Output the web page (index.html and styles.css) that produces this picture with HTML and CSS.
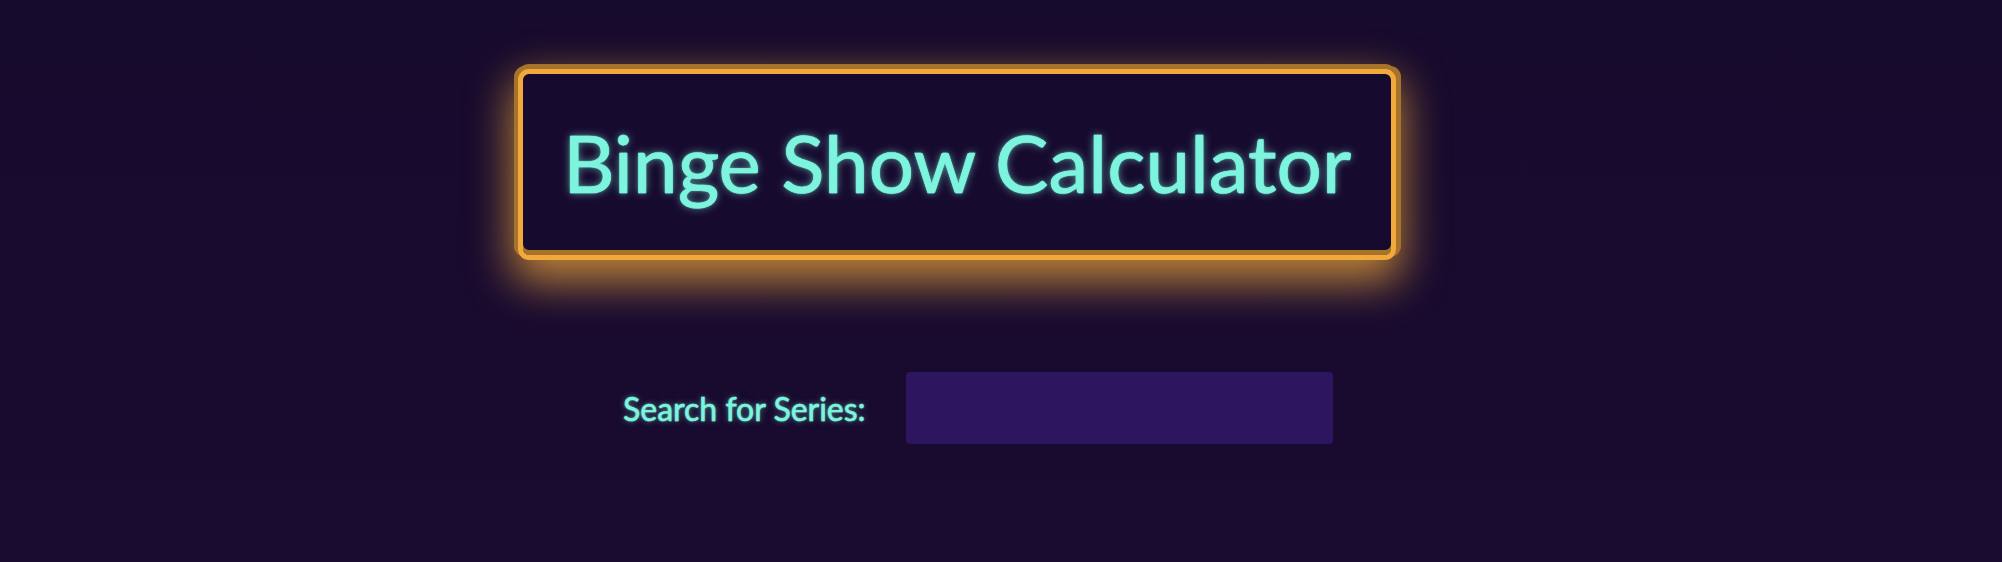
FILE: index.html
```html
<!DOCTYPE html>
<html lang="en">
<head>
<meta charset="utf-8">
<title>Binge Show Calculator</title>
<link rel="stylesheet" href="styles.css">
</head>
<body>
<main class="page">
  <header class="hero">
    <h1 class="hero-title">Binge Show Calculator</h1>
  </header>
  <form class="search-row">
    <label class="search-label" for="series">Search for Series:</label>
    <input class="search-input" id="series" type="text">
  </form>
</main>
</body>
</html>
```

FILE: styles.css
```css
html, body {
  margin: 0;
  padding: 0;
}

body {
  min-height: 562px;
  background: linear-gradient(180deg, #160a2d 0%, #1a0b31 100%);
  font-family: Lato, "Open Sans", "Liberation Sans", sans-serif;
  color: #7df5de;
}

.page {
  display: flex;
  flex-direction: column;
  padding: 69px 0 0 518px;
}

.hero {
  box-sizing: border-box;
  width: 878px;
  height: 191px;
  border: 5px solid #f2a93b;
  border-radius: 11px;
  background: #170a2f;
  display: flex;
  align-items: center;
  justify-content: center;
  box-shadow:
    inset 0 -5px 0 #a7732a,
    0 -5px 0 0 #a7732a,
    -4px -3px 0 0 #a7732a,
    5px -3px 0 0 #a7732a,
    0 16px 44px 6px rgba(242, 169, 59, 0.75);
}

.hero-title {
  margin: 0 0 6px 0;
  font-family: Lato, "Open Sans", "Liberation Sans", sans-serif;
  font-weight: 400;
  font-size: 80px;
  line-height: 1;
  color: #7df5de;
  -webkit-text-stroke: 0.7px #7df5de;
  text-shadow: 0 0 2px rgba(125, 245, 222, 0.9), 0 0 9px rgba(125, 245, 222, 0.6);
}

.search-row {
  display: flex;
  align-items: center;
  gap: 40px;
  margin: 112px 0 0 105px;
}

.search-label {
  font-size: 32px;
  font-weight: 400;
  color: #7df5de;
  -webkit-text-stroke: 0.45px #7df5de;
  text-shadow: 0 0 2px rgba(125, 245, 222, 0.8), 0 0 6px rgba(125, 245, 222, 0.5);
}

.search-input {
  box-sizing: border-box;
  width: 427px;
  height: 72px;
  border: none;
  border-radius: 4px;
  background: #2e1560;
  outline: none;
}
```
